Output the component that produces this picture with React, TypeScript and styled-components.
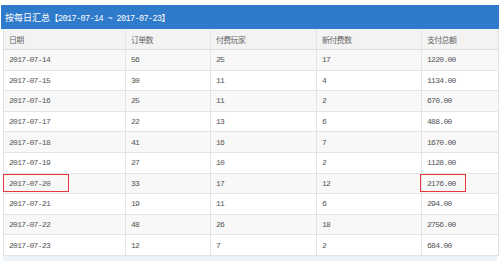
import styled, { createGlobalStyle } from "styled-components";

const GlobalStyle = createGlobalStyle`
  html, body {
    margin: 0;
    padding: 0;
    background: #ffffff;
  }
`;

interface IDay {
  date: string;
  orders: number;
  payers: number;
  newPayers: number;
  total: string;
  marked?: boolean;
}

const days: IDay[] = [
  { date: "2017-07-14", orders: 56, payers: 25, newPayers: 17, total: "1220.00" },
  { date: "2017-07-15", orders: 30, payers: 11, newPayers: 4, total: "1134.00" },
  { date: "2017-07-16", orders: 25, payers: 11, newPayers: 2, total: "670.00" },
  { date: "2017-07-17", orders: 22, payers: 13, newPayers: 6, total: "488.00" },
  { date: "2017-07-18", orders: 41, payers: 16, newPayers: 7, total: "1670.00" },
  { date: "2017-07-19", orders: 27, payers: 10, newPayers: 2, total: "1128.00" },
  { date: "2017-07-20", orders: 33, payers: 17, newPayers: 12, total: "2176.00", marked: true },
  { date: "2017-07-21", orders: 19, payers: 11, newPayers: 6, total: "294.00" },
  { date: "2017-07-22", orders: 48, payers: 26, newPayers: 18, total: "2756.00" },
  { date: "2017-07-23", orders: 12, payers: 7, newPayers: 2, total: "684.00" },
];

const columns = ["122px", "85px", "106px", "105px", "1fr"];

export default function App() {
  return (
    <Panel>
      <GlobalStyle />
      <Title>
        按每日汇总<Range>【2017-07-14 ~ 2017-07-23】</Range>
      </Title>
      <Table>
        <HeadRow>
          <Cell>日期</Cell>
          <Cell>订单数</Cell>
          <Cell>付费玩家</Cell>
          <Cell>新付费数</Cell>
          <Cell>支付总额</Cell>
        </HeadRow>
        {days.map((day, index) => (
          <Row key={day.date} $striped={index % 2 === 0}>
            <Cell>
              {day.date}
              {day.marked && <Mark $width="66px" $left="-1px" />}
            </Cell>
            <Cell>{day.orders}</Cell>
            <Cell>{day.payers}</Cell>
            <Cell>{day.newPayers}</Cell>
            <Cell>
              {day.total}
              {day.marked && <Mark $width="46px" $left="-2px" />}
            </Cell>
          </Row>
        ))}
      </Table>
      <Footer />
    </Panel>
  );
}

const Panel = styled.div`
  width: 498px;
  padding: 5px 0 0 1px;
  font-family: "Liberation Mono", "Noto Sans CJK SC", monospace;
`;

const Title = styled.div`
  height: 24px;
  display: flex;
  align-items: center;
  padding-left: 4px;
  background: #2f7bcb;
  color: #ffffff;
  font-family: "Noto Sans CJK SC", sans-serif;
  font-size: 9px;
`;

const Range = styled.span`
  font-family: "Liberation Mono", "Noto Sans CJK SC", monospace;
  font-size: 8.5px;
  letter-spacing: -0.6px;
`;

const Table = styled.div`
  margin-left: 2px;
  width: 494px;
  border-left: 1px solid #e2e2e2;
  border-right: 1px solid #e2e2e2;
`;

const Row = styled.div<{ $striped?: boolean }>`
  display: grid;
  grid-template-columns: ${columns.join(" ")};
  height: 20.6px;
  background: ${(p) => (p.$striped ? "#f8f8f8" : "#ffffff")};
  border-bottom: 1px solid #e4e4e4;
  box-sizing: border-box;
  color: #555555;
`;

const HeadRow = styled(Row)`
  height: 21px;
  background: #f3f3f3;
  border-bottom: 1px solid #dcdcdc;
  color: #666666;
`;

const Cell = styled.div`
  position: relative;
  display: flex;
  align-items: center;
  padding-left: 5px;
  font-size: 8px;
  letter-spacing: -0.7px;
  border-right: 1px solid #e4e4e4;

  &:last-child {
    border-right: none;
  }
`;

const Mark = styled.span<{ $width: string; $left: string }>`
  position: absolute;
  top: 0px;
  left: ${(p) => p.$left};
  width: ${(p) => p.$width};
  height: 18px;
  border: 1.5px solid #e8383d;
  box-sizing: border-box;
`;

const Footer = styled.div`
  margin-left: 2px;
  width: 494px;
  height: 6px;
  background: #eef3f8;
`;
